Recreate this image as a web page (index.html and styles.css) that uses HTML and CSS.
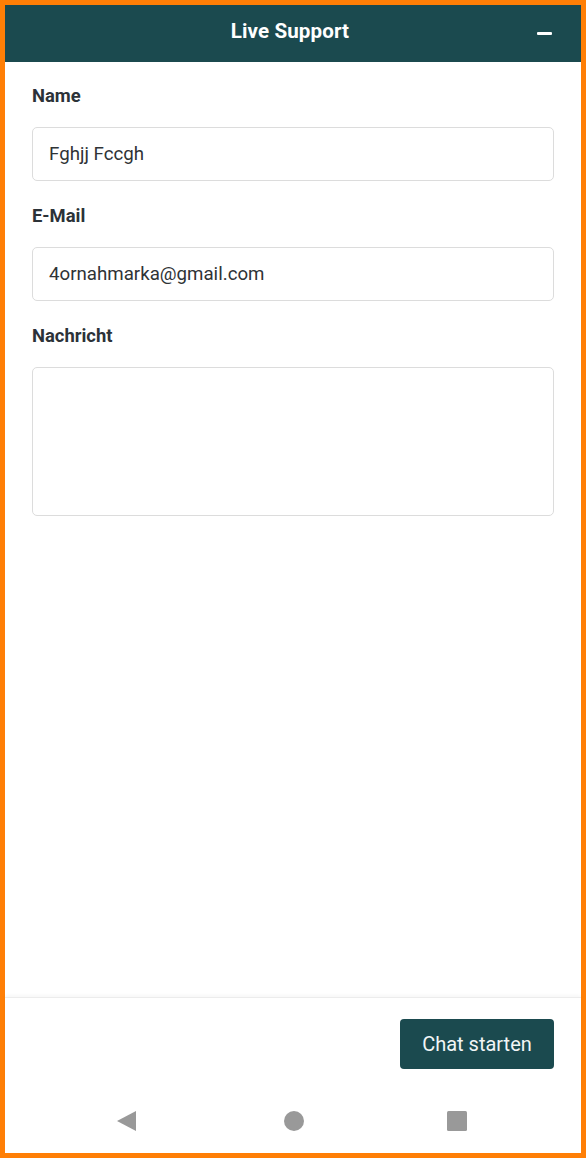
FILE: index.html
```html
<!DOCTYPE html>
<html lang="de">
<head>
<meta charset="utf-8">
<title>Live Support</title>
<link rel="stylesheet" href="styles.css">
</head>
<body>
<div class="frame">
  <header class="header">
    <h1 class="title">Live Support</h1>
    <button class="minimize" aria-label="Minimieren"><span class="bar"></span></button>
  </header>
  <main class="form">
    <label class="label">Name</label>
    <div class="input">Fghjj Fccgh</div>
    <label class="label">E-Mail</label>
    <div class="input">4ornahmarka@gmail.com</div>
    <label class="label">Nachricht</label>
    <div class="textarea"></div>
  </main>
  <footer class="footer">
    <button class="start">Chat starten</button>
  </footer>
  <nav class="navbar">
    <svg class="nav-icon" width="22" height="22" viewBox="0 0 22 22"><polygon points="1,11 20,1 20,21" fill="#999"/></svg>
    <svg class="nav-icon" width="22" height="22" viewBox="0 0 22 22"><circle cx="11" cy="11" r="10" fill="#999"/></svg>
    <svg class="nav-icon" width="22" height="22" viewBox="0 0 22 22"><rect x="1" y="1" width="20" height="20" rx="1.5" fill="#999"/></svg>
  </nav>
</div>
</body>
</html>
```
FILE: styles.css
```css
html, body {
  margin: 0;
  padding: 0;
  background: #fff;
}
.frame {
  box-sizing: border-box;
  width: 586px;
  height: 1158px;
  border: 5px solid #ff7f06;
  display: flex;
  flex-direction: column;
  font-family: Roboto, "Liberation Sans", sans-serif;
  background: #fff;
}
.header {
  height: 57px;
  flex: none;
  box-sizing: border-box;
  padding: 0 6px 5px 0;
  background: #1b4a4f;
  display: flex;
  align-items: center;
  justify-content: center;
  position: relative;
}
.title {
  margin: 0;
  color: #fff;
  font-size: 20.6px;
  font-weight: 700;
  letter-spacing: 0.1px;
}
.minimize {
  position: absolute;
  right: 27px;
  top: 20px;
  width: 20px;
  height: 16px;
  padding: 0;
  border: 0;
  background: transparent;
  display: flex;
  align-items: center;
  justify-content: center;
}
.minimize .bar {
  display: block;
  width: 15px;
  height: 3px;
  background: #fff;
  border-radius: 1px;
}
.form {
  flex: 1;
  display: flex;
  flex-direction: column;
  padding: 23px 27px 0 27px;
}
.label {
  font-size: 18.4px;
  font-weight: 700;
  color: #2c3238;
  line-height: 21px;
  margin-bottom: 21px;
}
.input {
  box-sizing: border-box;
  height: 54px;
  border: 1px solid #dcdcdc;
  border-radius: 5px;
  padding: 0 16px 1px;
  display: flex;
  align-items: center;
  font-size: 18.7px;
  color: #2f3336;
  margin-bottom: 24px;
}
.textarea {
  box-sizing: border-box;
  height: 149px;
  border: 1px solid #dcdcdc;
  border-radius: 5px;
}
.footer {
  flex: none;
  height: 93px;
  border-top: 1px solid #ececec;
  box-shadow: 0 -2px 3px rgba(0,0,0,0.03);
  display: flex;
  justify-content: flex-end;
  align-items: flex-start;
  padding: 21px 27px 0 0;
  box-sizing: border-box;
}
.start {
  width: 154px;
  height: 50px;
  border: 0;
  border-radius: 4px;
  background: #1b4a4f;
  color: #f2f6f6;
  font-family: Roboto, "Liberation Sans", sans-serif;
  font-size: 20px;
  padding: 0;
}
.navbar {
  flex: none;
  height: 63px;
  display: flex;
  align-items: center;
  padding-bottom: 2px;
  box-sizing: border-box;
}
.nav-icon:nth-child(1) { margin-left: 111px; }
.nav-icon:nth-child(2) { margin-left: 145px; }
.nav-icon:nth-child(3) { margin-left: 141px; }
```
